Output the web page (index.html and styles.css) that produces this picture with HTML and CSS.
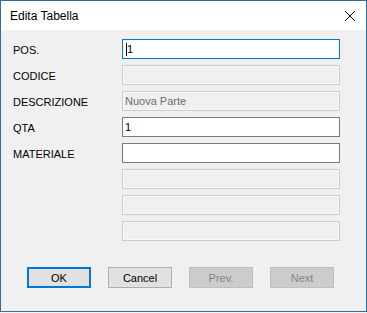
FILE: index.html
```html
<!DOCTYPE html>
<html lang="it">
    <head>
        <meta charset="UTF-8" />
        <title>Edita Tabella</title>
        <link rel="stylesheet" href="styles.css">
    </head>
    <body>
        <div class="window">
            <div class="titlebar">
                <span class="title">Edita Tabella</span>
                <span class="close">
                    <svg width="12" height="12" viewBox="0 0 12 12">
                        <path d="M1 1 L11 11 M11 1 L1 11" stroke="#000" stroke-width="1" fill="none" />
                    </svg>
                </span>
            </div>

            <div class="content">
                <div class="form">
                    <label>POS.</label>
                    <div class="field focus"><span class="caret"></span>1</div>

                    <label>CODICE</label>
                    <div class="field disabled"></div>

                    <label>DESCRIZIONE</label>
                    <div class="field disabled">Nuova Parte</div>

                    <label>QTA</label>
                    <div class="field">1</div>

                    <label>MATERIALE</label>
                    <div class="field"></div>

                    <label></label>
                    <div class="field disabled"></div>

                    <label></label>
                    <div class="field disabled"></div>

                    <label></label>
                    <div class="field disabled"></div>
                </div>

                <div class="buttons">
                    <button class="btn default">OK</button>
                    <button class="btn">Cancel</button>
                    <button class="btn" disabled>Prev.</button>
                    <button class="btn" disabled>Next</button>
                </div>
            </div>
        </div>
    </body>
</html>
```

FILE: styles.css
```css
* {
    margin: 0;
    padding: 0;
    box-sizing: border-box;
}
body {
    font-family: "Liberation Sans", Arial, sans-serif;
    font-size: 11px;
    background: #f4f4f4;
    color: #000;
}

.window {
    width: 367px;
    height: 312px;
    border: 1px solid #2e6da4;
    background: #f0f0f0;
    display: flex;
    flex-direction: column;
}

.titlebar {
    height: 29px;
    background: #fff;
    display: flex;
    align-items: center;
    justify-content: space-between;
    padding: 0 10px 0 9px;
}
.title {
    font-size: 12px;
    padding-top: 1px;
}
.close {
    display: flex;
    width: 12px;
    height: 12px;
}

.content {
    padding: 9px 0 0 12px;
}

.form {
    display: grid;
    grid-template-columns: 109px 218px;
    grid-auto-rows: 20px;
    row-gap: 6px;
    align-items: center;
}
.form label {
    padding-top: 1px;
}

.field {
    height: 20px;
    border: 1px solid #7a7a7a;
    background: #fff;
    padding: 0 2px;
    display: flex;
    align-items: center;
}
.field.focus {
    border-color: #0078d7;
}
.field.disabled {
    border-color: #cccccc;
    background: #f0f0f0;
    box-shadow: inset 0 0 0 1px #f7f7f7;
    color: #6d6d6d;
}
.caret {
    display: inline-block;
    width: 1px;
    height: 13px;
    background: #000;
    margin: 0 0 0 1px;
}

.buttons {
    display: flex;
    gap: 17px;
    margin: 26px 0 0 14px;
}
.btn {
    width: 64px;
    height: 21px;
    font-family: "Liberation Sans", Arial, sans-serif;
    font-size: 11px;
    background: #e1e1e1;
    border: 1px solid #adadad;
    color: #000;
}
.btn.default {
    border: 2px solid #0078d7;
}
.btn:disabled {
    background: #cccccc;
    border-color: #bfbfbf;
    color: #838383;
}
```
